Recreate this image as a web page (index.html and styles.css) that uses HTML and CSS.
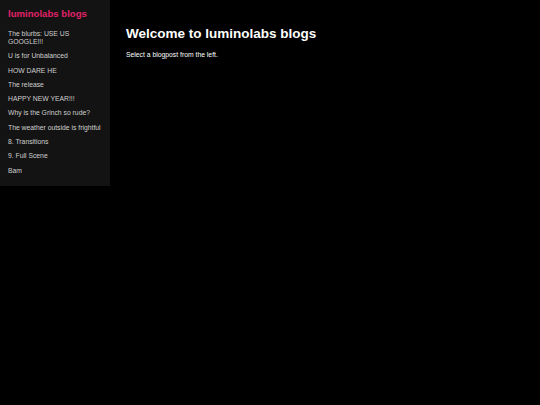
FILE: index.html
```html
<!DOCTYPE html>
<html>
<head>
<meta charset="utf-8">
<link rel="stylesheet" href="styles.css">
</head>
<body>
<div class="layout">
  <nav class="sidebar">
    <h2 class="brand">luminolabs blogs</h2>
    <ul class="posts">
      <li><a href="#">The blurbs: USE US GOOGLE!!!</a></li>
      <li><a href="#">U is for Unbalanced</a></li>
      <li><a href="#">HOW DARE HE</a></li>
      <li><a href="#">The release</a></li>
      <li><a href="#">HAPPY NEW YEAR!!!</a></li>
      <li><a href="#">Why is the Grinch so rude?</a></li>
      <li><a href="#">The weather outside is frightful</a></li>
      <li><a href="#">8. Transitions</a></li>
      <li><a href="#">9. Full Scene</a></li>
      <li><a href="#">Bam</a></li>
    </ul>
  </nav>
  <main class="content">
    <h1 class="title">Welcome to luminolabs blogs</h1>
    <p class="lead">Select a blogpost from the left.</p>
  </main>
</div>
</body>
</html>
```

FILE: styles.css
```css
html, body {
  margin: 0;
  padding: 0;
  background: #000;
  height: 100%;
}
body {
  font-family: "Liberation Sans", Arial, sans-serif;
  color: #fff;
}
.layout {
  display: flex;
  align-items: flex-start;
}
.sidebar {
  width: 110px;
  box-sizing: border-box;
  background: #131313;
  padding: 8px 8px 11px 8px;
}
.brand {
  margin: 0 0 10.5px 0;
  font-size: 9.6px;
  line-height: 11px;
  font-weight: bold;
  color: #e0226a;
}
.posts {
  list-style: none;
  margin: 0;
  padding: 0;
}
.posts li {
  font-size: 6.8px;
  line-height: 8.5px;
  margin-bottom: 5.8px;
}
.posts li:last-child {
  margin-bottom: 0;
}
.posts a {
  color: #cfcfcf;
  text-decoration: none;
}
.content {
  flex: 1;
  padding: 26px 16px 0 16px;
}
.title {
  margin: 0 0 9px 0;
  font-size: 13.5px;
  line-height: 16px;
  font-weight: bold;
  color: #fff;
}
.lead {
  margin: 0;
  font-size: 6.8px;
  line-height: 8px;
  color: #fff;
}
```
